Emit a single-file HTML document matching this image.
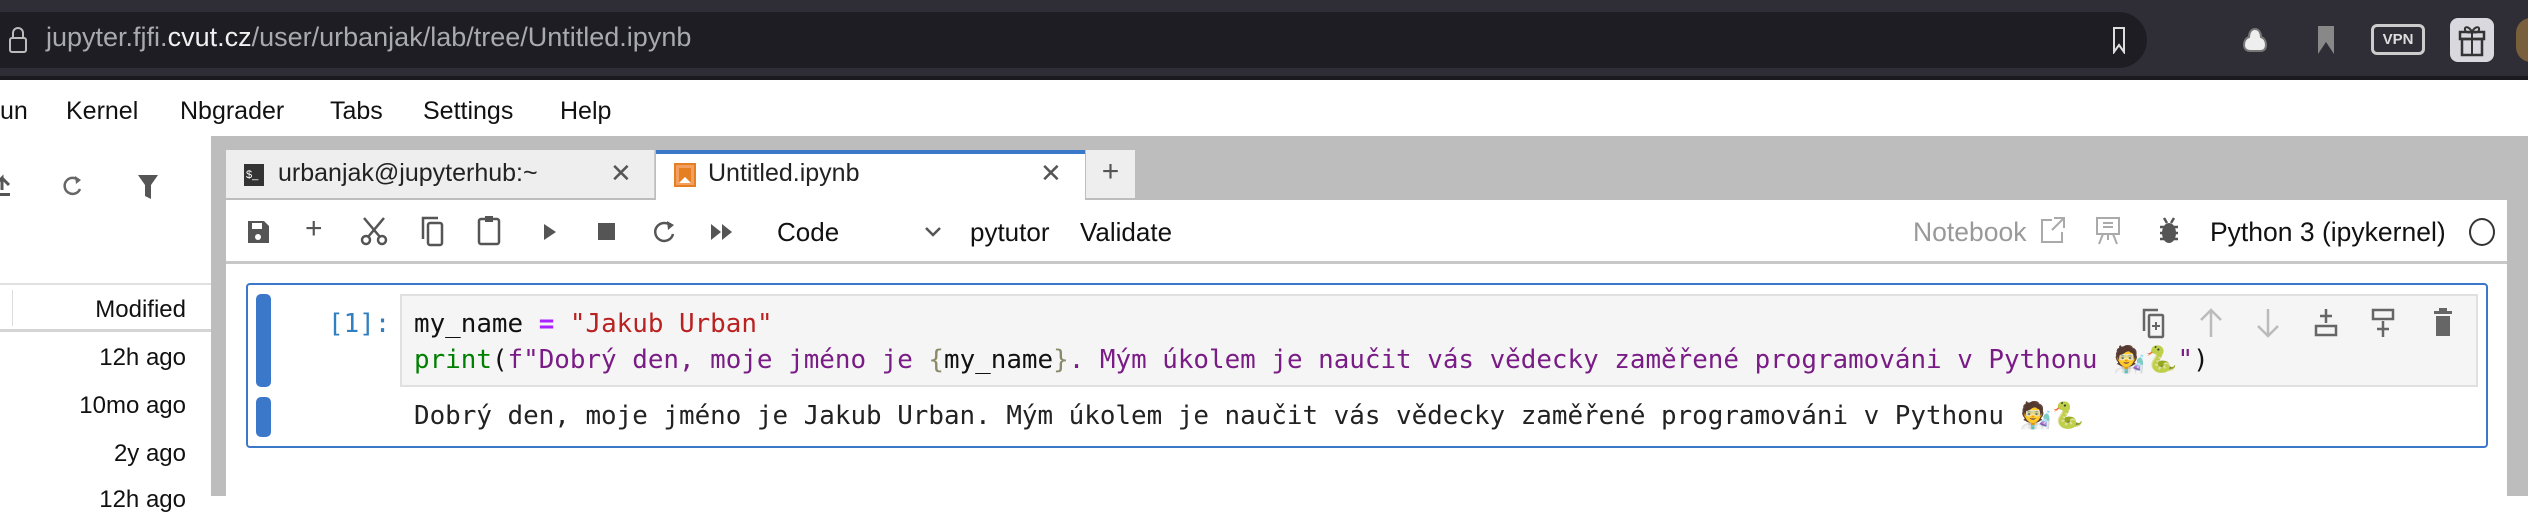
<!DOCTYPE html>
<html><head><meta charset="utf-8"><style>
*{margin:0;padding:0;box-sizing:border-box}
body{width:2528px;height:496px;overflow:hidden;background:#fff;font-family:"Liberation Sans",sans-serif;position:relative}
.a{position:absolute;white-space:nowrap}
.mono{font-family:"DejaVu Sans Mono","Liberation Mono",monospace;font-size:25.9px}
.ic{position:absolute}
</style></head><body>
<div class="a" style="left:0;top:0;width:2528px;height:80px;background:#2f2e36"></div>
<div class="a" style="left:0;top:76px;width:2528px;height:4px;background:#1a1a1f"></div>
<div class="a" style="left:-40px;top:12px;width:2187px;height:56px;background:#1e1d24;border-radius:28px"></div>
<svg class="ic" style="left:8px;top:26px" width="20" height="28" viewBox="0 0 20 28"><path d="M5 12V7a5 5 0 0 1 10 0v5" fill="none" stroke="#bbb" stroke-width="2"/><rect x="2" y="12" width="16" height="14" rx="2" fill="none" stroke="#bbb" stroke-width="2"/></svg>
<div class="a" style="left:46px;top:22px;font-size:27px;color:#a9a9b0">jupyter.fjfi.<span style="color:#f0f0f0">cvut.cz</span>/user/urbanjak/lab/tree/Untitled.ipynb</div>
<svg class="ic" style="left:2111px;top:26px" width="16" height="28" viewBox="0 0 16 28"><path d="M3 2h10v24l-5-7-5 7z" fill="none" stroke="#ddd" stroke-width="2"/></svg>
<svg class="ic" style="left:2240px;top:26px" width="30" height="28" viewBox="0 0 30 28"><path d="M15 3c-4 0-6 4-6 8-3 1-5 4-5 8s3 6 6 6h10c4 0 6-2 6-6s-2-7-5-8c0-4-2-8-6-8z" fill="#eee" stroke="#777" stroke-width="2"/></svg>
<svg class="ic" style="left:2316px;top:24px" width="20" height="32" viewBox="0 0 20 32"><path d="M2 2h16v28l-8-12-8 12z" fill="#888"/></svg>
<div class="a" style="left:2371px;top:24px;width:54px;height:31px;border:3px solid #ccc;border-radius:6px;color:#ddd;font-size:15px;font-weight:bold;text-align:center;line-height:25px">VPN</div>
<div class="a" style="left:2450px;top:18px;width:44px;height:44px;background:#d8d8de;border-radius:8px"></div>
<svg class="ic" style="left:2456px;top:22px" width="32" height="36" viewBox="0 0 32 36"><rect x="4" y="10" width="24" height="7" fill="none" stroke="#333" stroke-width="2.5"/><rect x="6" y="17" width="20" height="16" fill="none" stroke="#333" stroke-width="2.5"/><path d="M16 10v23M16 10c-3-6-8-6-7-2s7 2 7 2c3-6 8-6 7-2s-7 2-7 2" fill="none" stroke="#333" stroke-width="2"/></svg>
<div class="a" style="left:2516px;top:18px;width:30px;height:44px;background:#7a5f3c;border-radius:22px"></div>
<div class="a" style="left:0;top:97px;font-size:25px;color:#111">un</div>
<div class="a" style="left:66px;top:97px;font-size:25px;color:#111">Kernel</div>
<div class="a" style="left:180px;top:97px;font-size:25px;color:#111">Nbgrader</div>
<div class="a" style="left:330px;top:97px;font-size:25px;color:#111">Tabs</div>
<div class="a" style="left:423px;top:97px;font-size:25px;color:#111">Settings</div>
<div class="a" style="left:560px;top:97px;font-size:25px;color:#111">Help</div>
<div class="a" style="left:211px;top:136px;width:2317px;height:360px;background:#bdbdbd"></div>
<div class="a" style="left:0;top:136px;width:211px;height:360px;background:#fff"></div>
<svg class="ic" style="left:-6px;top:172px" width="20" height="28" viewBox="0 0 20 28"><path d="M8 18V6l-7 7M8 6l7 7" fill="none" stroke="#555" stroke-width="3"/><rect x="0" y="21" width="16" height="3" fill="#555"/></svg>
<svg class="ic" style="left:62px;top:173px" width="22" height="26" viewBox="0 0 22 26"><path d="M17 8a8 8 0 1 0 1 8" fill="none" stroke="#666" stroke-width="2.5"/><path d="M13 3l6 4-5 4z" fill="#666"/></svg>
<svg class="ic" style="left:137px;top:174px" width="22" height="26" viewBox="0 0 22 26"><path d="M1 1h20l-7 10v14l-6-3V11z" fill="#555"/></svg>
<div class="a" style="left:0;top:283px;width:211px;height:2px;background:#e0e0e0"></div>
<div class="a" style="left:12px;top:290px;width:1px;height:36px;background:#ddd"></div>
<div class="a" style="left:0;top:329px;width:211px;height:3px;background:#d5d5d5"></div>
<div class="a" style="left:0;top:296px;width:186px;text-align:right;font-size:24px;color:#111">Modified</div>
<div class="a" style="left:0;top:344px;width:186px;text-align:right;font-size:24px;color:#111">12h ago</div>
<div class="a" style="left:0;top:392px;width:186px;text-align:right;font-size:24px;color:#111">10mo ago</div>
<div class="a" style="left:0;top:440px;width:186px;text-align:right;font-size:24px;color:#111">2y ago</div>
<div class="a" style="left:0;top:486px;width:186px;text-align:right;font-size:24px;color:#111">12h ago</div>
<div class="a" style="left:226px;top:150px;width:429px;height:48px;background:#eee;border-right:1px solid #ccc"></div>
<div class="a" style="left:244px;top:164px;width:20px;height:22px;background:#333;color:#fff;font-size:11px;line-height:22px;padding-left:2px">$_</div>
<div class="a" style="left:278px;top:159px;font-size:25px;color:#222">urbanjak@jupyterhub:~</div>
<div class="a" style="left:610px;top:158px;font-size:26px;color:#555">✕</div>
<div class="a" style="left:656px;top:150px;width:429px;height:50px;background:#fff;border-top:4px solid #3b78c9"></div>
<svg class="ic" style="left:674px;top:163px" width="22" height="24" viewBox="0 0 22 24"><rect x="1" y="1" width="20" height="22" fill="#f1a061" stroke="#e67e22" stroke-width="2"/><path d="M5 20V5h12v15l-6-6z" fill="#e67e22"/><path d="M5 20l6-6 6 6z" fill="#fff"/></svg>
<div class="a" style="left:708px;top:159px;font-size:25px;color:#222">Untitled.ipynb</div>
<div class="a" style="left:1040px;top:158px;font-size:26px;color:#555">✕</div>
<div class="a" style="left:1086px;top:150px;width:49px;height:48px;background:#eee;text-align:center;font-size:30px;line-height:44px;color:#555">+</div>
<div class="a" style="left:226px;top:200px;width:2281px;height:296px;background:#fff"></div>
<div class="a" style="left:226px;top:261px;width:2281px;height:3px;background:#c8c8c8"></div>
<svg class="ic" style="left:246px;top:219px" width="24" height="26" viewBox="0 0 24 26"><path d="M2 2h16l5 5v17H2z" fill="#555"/><rect x="6" y="4" width="10" height="6" fill="#fff"/><circle cx="12" cy="18" r="3" fill="#fff"/></svg>
<div class="a" style="left:305px;top:212px;font-size:30px;color:#555">+</div>
<svg class="ic" style="left:360px;top:216px" width="28" height="30" viewBox="0 0 28 30"><circle cx="6" cy="24" r="4" fill="none" stroke="#555" stroke-width="2.5"/><circle cx="22" cy="24" r="4" fill="none" stroke="#555" stroke-width="2.5"/><path d="M8 21L24 2M20 21L4 2" stroke="#555" stroke-width="2.5"/></svg>
<svg class="ic" style="left:420px;top:215px" width="26" height="32" viewBox="0 0 26 32"><path d="M3 24V3h15" fill="none" stroke="#555" stroke-width="2.5"/><rect x="8" y="8" width="14" height="22" rx="2" fill="none" stroke="#555" stroke-width="2.5"/></svg>
<svg class="ic" style="left:477px;top:214px" width="26" height="32" viewBox="0 0 26 32"><rect x="2" y="5" width="20" height="25" rx="2" fill="none" stroke="#555" stroke-width="2.5"/><rect x="8" y="2" width="8" height="6" fill="#555"/></svg>
<svg class="ic" style="left:542px;top:222px" width="16" height="20" viewBox="0 0 16 20"><path d="M2 2l12 8-12 8z" fill="#555"/></svg>
<div class="a" style="left:598px;top:223px;width:17px;height:17px;background:#555"></div>
<svg class="ic" style="left:653px;top:218px" width="24" height="28" viewBox="0 0 24 28"><path d="M18 8a9 9 0 1 0 2 8" fill="none" stroke="#555" stroke-width="2.5"/><path d="M14 3l7 4-6 5z" fill="#555"/></svg>
<svg class="ic" style="left:710px;top:223px" width="24" height="18" viewBox="0 0 24 18"><path d="M1 1l10 8-10 8zM12 1l10 8-10 8z" fill="#555"/></svg>
<div class="a" style="left:777px;top:217px;font-size:26px;color:#111">Code</div>
<svg class="ic" style="left:924px;top:226px" width="18" height="12" viewBox="0 0 18 12"><path d="M2 2l7 7 7-7" fill="none" stroke="#555" stroke-width="2.5"/></svg>
<div class="a" style="left:970px;top:217px;font-size:26px;color:#111">pytutor</div>
<div class="a" style="left:1080px;top:217px;font-size:26px;color:#111">Validate</div>
<div class="a" style="left:1913px;top:217px;font-size:26.5px;color:#999">Notebook</div>
<svg class="ic" style="left:2040px;top:216px" width="26" height="28" viewBox="0 0 26 28"><path d="M12 4H2v22h20V16M14 2h10v10M24 2L12 14" fill="none" stroke="#aaa" stroke-width="2"/></svg>
<svg class="ic" style="left:2095px;top:216px" width="26" height="30" viewBox="0 0 26 30"><rect x="2" y="2" width="22" height="16" fill="none" stroke="#aaa" stroke-width="2"/><path d="M8 18l-4 10M18 18l4 10M13 18v6M8 7h10M8 11h10" stroke="#aaa" stroke-width="2"/></svg>
<svg class="ic" style="left:2158px;top:216px" width="22" height="30" viewBox="0 0 22 30"><ellipse cx="11" cy="17" rx="7" ry="10" fill="#555"/><path d="M2 11h18M2 17h18M2 23h18M6 2l3 5M16 2l-3 5" stroke="#555" stroke-width="2.5"/></svg>
<div class="a" style="left:2210px;top:217px;font-size:26.5px;color:#111">Python 3 (ipykernel)</div>
<div class="a" style="left:2469px;top:218px;width:26px;height:28px;border:2.5px solid #333;border-radius:50%"></div>
<div class="a" style="left:246px;top:283px;width:2242px;height:165px;border:2px solid #3b78c9;border-radius:4px"></div>
<div class="a" style="left:256px;top:294px;width:15px;height:93px;background:#3b78c9;border-radius:5px"></div>
<div class="a" style="left:256px;top:397px;width:15px;height:40px;background:#3b78c9;border-radius:5px"></div>
<div class="a" style="left:400px;top:294px;width:2078px;height:93px;background:#f5f5f5;border:2px solid #e0e0e0"></div>
<div class="a mono" style="left:328px;top:308px;color:#307fc1;line-height:32px">[1]:</div>
<div class="a mono" style="left:414px;top:306px;line-height:36px;color:#111">my_name <b style="color:#aa22ff">=</b> <span style="color:#ba2121">"Jakub Urban"</span><br><span style="color:#008000">print</span>(<span style="color:#7a1c86">f"Dobrý den, moje jméno je </span><span style="color:#8a8a6a">{</span>my_name<span style="color:#8a8a6a">}</span><span style="color:#7a1c86">. Mým úkolem je naučit vás vědecky zaměřené programováni v Pythonu 🧑‍🔬🐍"</span>)</div>
<div class="a mono" style="left:414px;top:398px;line-height:36px;color:#222">Dobrý den, moje jméno je Jakub Urban. Mým úkolem je naučit vás vědecky zaměřené programováni v Pythonu 🧑‍🔬🐍</div>
<svg class="ic" style="left:2141px;top:307px" width="26" height="32" viewBox="0 0 26 32"><path d="M3 24V3h14" fill="none" stroke="#666" stroke-width="2.5"/><rect x="8" y="8" width="14" height="22" rx="1" fill="none" stroke="#666" stroke-width="2.5"/><path d="M15 15v8M11 19h8" stroke="#666" stroke-width="2"/></svg>
<svg class="ic" style="left:2199px;top:307px" width="24" height="32" viewBox="0 0 24 32"><path d="M12 30V3M2 13L12 3l10 10" fill="none" stroke="#bbb" stroke-width="2.5"/></svg>
<svg class="ic" style="left:2256px;top:307px" width="24" height="32" viewBox="0 0 24 32"><path d="M12 2v27M2 19l10 10 10-10" fill="none" stroke="#bbb" stroke-width="2.5"/></svg>
<svg class="ic" style="left:2314px;top:307px" width="24" height="32" viewBox="0 0 24 32"><path d="M12 2v14M6 9h12" stroke="#666" stroke-width="2.5"/><rect x="2" y="19" width="20" height="9" fill="none" stroke="#666" stroke-width="2.5"/></svg>
<svg class="ic" style="left:2371px;top:307px" width="24" height="32" viewBox="0 0 24 32"><rect x="2" y="3" width="20" height="9" fill="none" stroke="#666" stroke-width="2.5"/><path d="M12 14v16M6 22h12" stroke="#666" stroke-width="2.5"/></svg>
<svg class="ic" style="left:2433px;top:308px" width="20" height="30" viewBox="0 0 20 30"><rect x="1" y="3" width="18" height="3" fill="#666"/><rect x="6" y="0" width="8" height="3" fill="#666"/><path d="M3 8h14v20H3z" fill="#666"/></svg>
</body></html>
